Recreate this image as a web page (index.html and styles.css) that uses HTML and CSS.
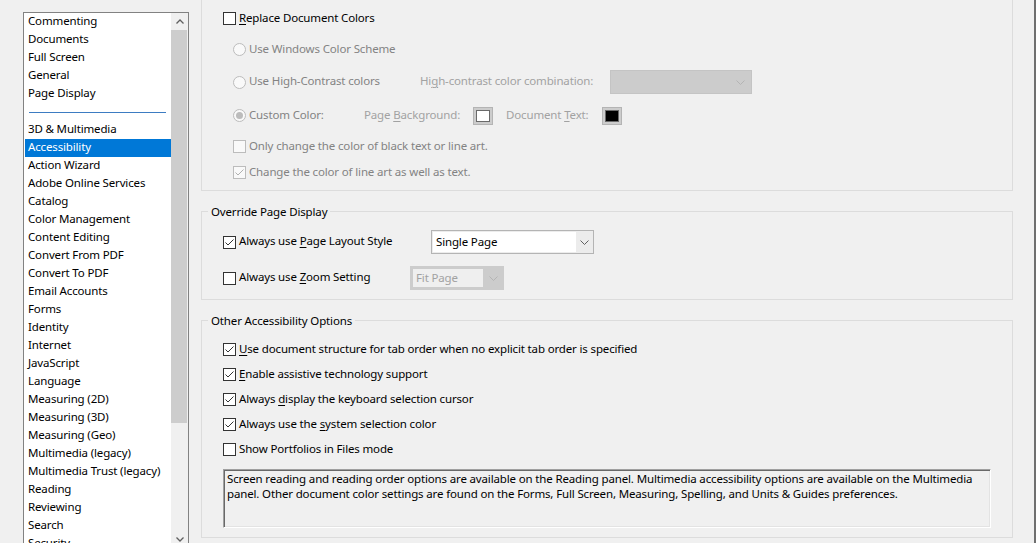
FILE: index.html
```html
<!DOCTYPE html>
<html lang="en">
<head>
<meta charset="utf-8">
<title>Preferences - Accessibility</title>
<link rel="stylesheet" href="styles.css">
</head>
<body>
<div class="window">
  <aside class="sidebar">
    <div class="listbox">
      <ul class="items">
        <li>Commenting</li>
        <li>Documents</li>
        <li>Full Screen</li>
        <li>General</li>
        <li>Page Display</li>
        <li class="sep"></li>
        <li>3D &amp; Multimedia</li>
        <li class="selected">Accessibility</li>
        <li>Action Wizard</li>
        <li>Adobe Online Services</li>
        <li>Catalog</li>
        <li>Color Management</li>
        <li>Content Editing</li>
        <li>Convert From PDF</li>
        <li>Convert To PDF</li>
        <li>Email Accounts</li>
        <li>Forms</li>
        <li>Identity</li>
        <li>Internet</li>
        <li>JavaScript</li>
        <li>Language</li>
        <li>Measuring (2D)</li>
        <li>Measuring (3D)</li>
        <li>Measuring (Geo)</li>
        <li>Multimedia (legacy)</li>
        <li>Multimedia Trust (legacy)</li>
        <li>Reading</li>
        <li>Reviewing</li>
        <li>Search</li>
        <li>Security</li>
      </ul>
      <div class="vscroll">
        <div class="sbtn"><svg width="8" height="5" viewBox="0 0 8 5"><path d="M0.5 4.5 L4 1 L7.5 4.5" fill="none" stroke="#606060" stroke-width="1.3"/></svg></div>
        <div class="track"><div class="thumb"></div></div>
        <div class="sbtn"><svg width="8" height="5" viewBox="0 0 8 5"><path d="M0.5 0.5 L4 4 L7.5 0.5" fill="none" stroke="#606060" stroke-width="1.3"/></svg></div>
      </div>
    </div>
  </aside>

  <main class="panel">
    <section class="group group-cut">
      <div class="row r1">
        <span class="cb"></span><span class="t"><u>R</u>eplace Document Colors</span>
      </div>
      <div class="row sub r2 dis-t">
        <span class="rb"></span><span class="t">Use Windows Color Scheme</span>
      </div>
      <div class="row sub r3 h24">
        <span class="rb"></span><span class="t dis-t w-hc">Use High-Contrast colors</span>
        <span class="t dis-l w-hcl">Hi<u>g</u>h-contrast color combination:</span>
        <span class="combo-dis"><svg width="9" height="5" viewBox="0 0 9 5"><path d="M0.5 0.5 L4.5 4.5 L8.5 0.5" fill="none" stroke="#b4b4b4" stroke-width="1"/></svg></span>
      </div>
      <div class="row sub r4">
        <span class="rb on"></span><span class="t dis-t w-cc">Custom Color:</span>
        <span class="t dis-l w-pb">Page <u>B</u>ackground:</span>
        <span class="swatch"><span class="chip white"></span></span>
        <span class="t dis-l w-dt">Document <u>T</u>ext:</span>
        <span class="swatch"><span class="chip black"></span></span>
      </div>
      <div class="row sub r5 dis-t">
        <span class="cb dis"></span><span class="t">Only change the color of black text or line art.</span>
      </div>
      <div class="row sub r6 dis-t">
        <span class="cb dis"><svg width="11" height="11" viewBox="0 0 11 11"><path d="M1.5 5.5 L4 8 L9.5 2.5" fill="none" stroke="#b0b0b0" stroke-width="1"/></svg></span><span class="t">Change the color of line art as well as text.</span>
      </div>
    </section>

    <fieldset class="group">
      <legend>Override Page Display</legend>
      <div class="gbody g2">
        <div class="row h24">
          <span class="cb"><svg width="11" height="11" viewBox="0 0 11 11"><path d="M1.5 5.5 L4 8 L9.5 2.5" fill="none" stroke="#333" stroke-width="1"/></svg></span>
          <span class="t w-pl">Always use <u>P</u>age Layout Style</span>
          <span class="combo"><span class="combo-text">Single Page</span><span class="combo-arrow"><svg width="9" height="5" viewBox="0 0 9 5"><path d="M0.5 0.5 L4.5 4.5 L8.5 0.5" fill="none" stroke="#606060" stroke-width="1"/></svg></span></span>
        </div>
        <div class="row h24 r-zoom">
          <span class="cb"></span>
          <span class="t w-zs">Always use <u>Z</u>oom Setting</span>
          <span class="combo combo-off"><span class="combo-text">Fit Page</span><span class="combo-arrow"><svg width="9" height="5" viewBox="0 0 9 5"><path d="M0.5 0.5 L4.5 4.5 L8.5 0.5" fill="none" stroke="#b4b4b4" stroke-width="1"/></svg></span></span>
        </div>
      </div>
    </fieldset>

    <fieldset class="group">
      <legend>Other Accessibility Options</legend>
      <div class="gbody g3">
        <div class="row">
          <span class="cb"><svg width="11" height="11" viewBox="0 0 11 11"><path d="M1.5 5.5 L4 8 L9.5 2.5" fill="none" stroke="#333" stroke-width="1"/></svg></span><span class="t"><u>U</u>se document structure for tab order when no explicit tab order is specified</span>
        </div>
        <div class="row">
          <span class="cb"><svg width="11" height="11" viewBox="0 0 11 11"><path d="M1.5 5.5 L4 8 L9.5 2.5" fill="none" stroke="#333" stroke-width="1"/></svg></span><span class="t"><u>E</u>nable assistive technology support</span>
        </div>
        <div class="row">
          <span class="cb"><svg width="11" height="11" viewBox="0 0 11 11"><path d="M1.5 5.5 L4 8 L9.5 2.5" fill="none" stroke="#333" stroke-width="1"/></svg></span><span class="t">Always <u>d</u>isplay the keyboard selection cursor</span>
        </div>
        <div class="row">
          <span class="cb"><svg width="11" height="11" viewBox="0 0 11 11"><path d="M1.5 5.5 L4 8 L9.5 2.5" fill="none" stroke="#333" stroke-width="1"/></svg></span><span class="t">Always use the <u>s</u>ystem selection color</span>
        </div>
        <div class="row">
          <span class="cb"></span><span class="t">Show Portfolios in Files mode</span>
        </div>
        <div class="note">Screen reading and reading order options are available on the Reading panel. Multimedia accessibility options are available on the Multimedia<br>panel. Other document color settings are found on the Forms, Full Screen, Measuring, Spelling, and Units &amp; Guides preferences.</div>
      </div>
    </fieldset>
  </main>
</div>
</body>
</html>
```

FILE: styles.css
```css
html, body {
  margin: 0;
  padding: 0;
  height: 543px;
  overflow: hidden;
  background: #f0f0f0;
  font-family: "Noto Sans", "Segoe UI", "Liberation Sans", sans-serif;
  font-size: 11.5px;
  letter-spacing: -0.15px;
  color: #000;
}

u { text-decoration-thickness: 1px; text-underline-offset: 2px; }

.window {
  display: flex;
  width: 1036px;
  height: 543px;
  box-sizing: border-box;
  border-right: 2px solid #6f6f6f;
}

/* ---------- sidebar ---------- */
.sidebar {
  flex: none;
  padding: 12px 0 0 23px;
}

.listbox {
  width: 166px;
  height: 537px;
  box-sizing: border-box;
  border: 1px solid #828282;
  background: #fff;
  display: flex;
}

.items {
  list-style: none;
  margin: 0;
  padding: 0;
  width: 147px;
  overflow: hidden;
}

.items li {
  height: 18px;
  line-height: 16px;
  margin-left: 1px;
  padding-left: 3px;
  box-sizing: border-box;
  white-space: nowrap;
}

.items li.selected {
  background: #0078d7;
  color: #fff;
}

.items li.sep {
  height: 9px;
  margin: 0 5px 8px 5px;
  padding: 0;
  box-sizing: content-box;
  border-bottom: 1px solid #3d7cc2;
}

.vscroll {
  width: 17px;
  display: flex;
  flex-direction: column;
  background: #f0f0f0;
}

.sbtn {
  height: 17px;
  flex: none;
  display: flex;
  align-items: center;
  justify-content: center;
}

.track { flex: 1; }

.thumb {
  height: 393px;
  margin-right: 1px;
  background: #cdcdcd;
}

/* ---------- content panel ---------- */
.panel {
  margin-left: 12px;
  width: 812px;
  flex: none;
  display: flex;
  flex-direction: column;
}

.group {
  margin: 0 0 11px 0;
  padding: 0;
  min-width: 0;
  width: 812px;
  box-sizing: border-box;
  border: 1px solid #dcdcdc;
}

.group legend {
  margin-left: 6px;
  padding: 2px 3px 0 3px;
  height: 18px;
  box-sizing: border-box;
  line-height: 16px;
}

.group-cut {
  border-top: none;
  padding: 6px 0 5px 21px;
}

.row {
  display: flex;
  align-items: center;
  height: 25px;
  white-space: nowrap;
}

.row.h24 { height: 24px; }

.row .t {
  line-height: 16px;
  margin-bottom: 2px;
}

.sub { padding-left: 10px; }

.r2 { margin-top: 6px; }
.r3 { margin-top: 8px; }
.r4 { margin-top: 9px; }
.r5 { margin-top: 6px; }
.r6 { margin-top: 1px; }

.dis-t { color: #838383; }
.dis-l { color: #a2a2a2; }

.w-hc { width: 171px; }
.w-hcl { width: 190px; }
.w-cc { width: 115px; }
.w-pb { width: 109px; }
.w-dt { width: 96px; margin-left: 13px; }

/* checkbox */
.cb {
  flex: none;
  width: 13px;
  height: 13px;
  box-sizing: border-box;
  border: 1px solid #333;
  background: #fff;
  margin-right: 3px;
  display: flex;
  align-items: center;
  justify-content: center;
}

.cb.dis {
  border-color: #bcbcbc;
  background: #f9f9f9;
}

/* radio */
.rb {
  flex: none;
  width: 13px;
  height: 13px;
  box-sizing: border-box;
  border: 1px solid #bcbcbc;
  border-radius: 50%;
  background: #f9f9f9;
  margin-right: 3px;
  display: flex;
  align-items: center;
  justify-content: center;
}

.rb.on::after {
  content: "";
  width: 7px;
  height: 7px;
  border-radius: 50%;
  background: #bcbcbc;
}

/* disabled combo (high contrast) */
.combo-dis {
  flex: none;
  width: 142px;
  height: 24px;
  box-sizing: border-box;
  border: 1px solid #c4c4c4;
  background: #cccccc;
  display: flex;
  align-items: center;
  justify-content: flex-end;
  padding-right: 6px;
}

/* colour swatches */
.swatch {
  flex: none;
  width: 20px;
  height: 18px;
  box-sizing: border-box;
  border: 1px solid #b4b4b4;
  background: #cccccc;
  padding: 2px;
  display: flex;
}

.chip {
  flex: 1;
  border: 1px solid #6a6a6a;
}

.chip.white { background: #fff; }
.chip.black { background: #000; }

/* group bodies */
.gbody { padding-left: 21px; }

.g2 { padding-top: 10px; padding-bottom: 9px; }
.r-zoom { margin-top: 12px; }

.w-pl { width: 192px; }
.w-zs { width: 171px; }

.combo {
  flex: none;
  width: 163px;
  height: 24px;
  box-sizing: border-box;
  border: 1px solid #b4b4b4;
  background: #ececec;
  display: flex;
}

.combo-text {
  flex: 1;
  background: #fff;
  margin: 1px 0 1px 1px;
  padding-left: 3px;
  line-height: 19px;
}

.combo-arrow {
  width: 17px;
  display: flex;
  align-items: center;
  justify-content: center;
}

.combo-off {
  width: 94px;
  border-color: #cccccc;
  background: #cccccc;
  color: #a2a2a2;
}

.combo-off .combo-text {
  background: #efefef;
  margin: 2px 0 2px 2px;
  padding-left: 3px;
  line-height: 17px;
}

.combo-off .combo-arrow { width: 20px; }

.g3 { padding-top: 8px; padding-bottom: 9px; }

.note {
  margin-top: 7px;
  width: 768px;
  height: 59px;
  box-sizing: border-box;
  border: 1px solid;
  border-color: #a0a0a0 #ffffff #ffffff #a0a0a0;
  box-shadow: inset 1px 1px 0 #696969, inset -1px -1px 0 #e3e3e3;
  padding: 1px 2px 0 3px;
  line-height: 15px;
  white-space: nowrap;
  overflow: hidden;
}
```
